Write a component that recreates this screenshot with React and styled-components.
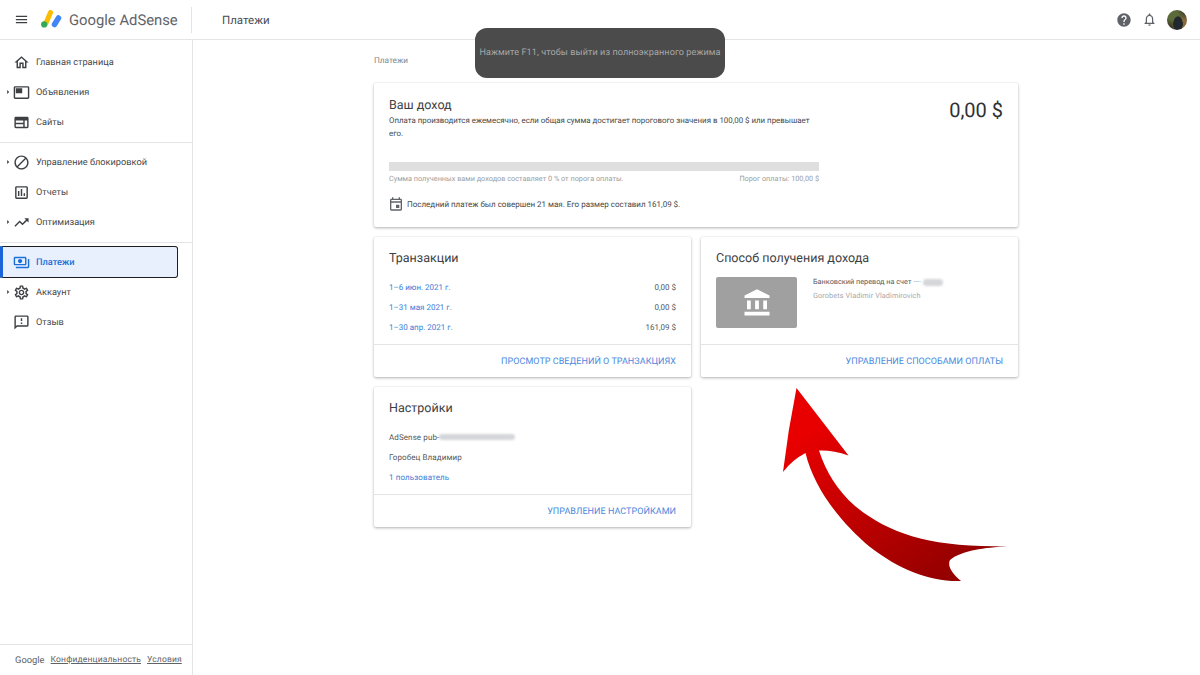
import styled, { createGlobalStyle } from "styled-components";
import {
  MdMenu, MdOutlineHome, MdOutlineFeaturedVideo, MdOutlineWeb, MdBlock, MdOutlineAssessment,
  MdTrendingUp, MdOutlinePayments, MdOutlineSettings, MdOutlineFeedback, MdOutlineEvent,
  MdAccountBalance, MdHelp, MdOutlineNotifications, MdArrowRight,
} from "react-icons/md";

const Global = createGlobalStyle`
  html, body { margin: 0; height: 100%; overflow: hidden; background: #fff; }
  * { box-sizing: border-box; }
  body {
    font-family: Roboto, "Liberation Sans", sans-serif;
    color: #3c4043;
    text-rendering: geometricPrecision;
  }
`;

const Page = styled.div`
  position: relative;
  width: 1200px;
  height: 675px;
  display: flex;
  flex-direction: column;
  overflow: hidden;
`;
const Header = styled.header`
  height: 40px;
  flex: none;
  display: flex;
  align-items: center;
  border-bottom: 1px solid #e4e4e4;
  padding: 0 13px 0 14px;
`;
const MenuButton = styled(MdMenu)`
  font-size: 15px;
  color: #3c4043;
  margin-right: 12px;
`;
const Logo = styled.div`
  display: flex;
  align-items: center;
  gap: 7px;
  width: 151px;
  height: 26px;
  border-right: 1px solid #e4e4e4;
  flex: none;
  font-size: 14.8px;
  color: #5f6368;
`;
const PageTitle = styled.div`
  margin-left: 30px;
  font-size: 11.5px;
  color: #4a4d50;
  flex: 1;
`;
const HeaderIcons = styled.div`
  display: flex;
  align-items: center;
`;
const HelpIcon = styled(MdHelp)`
  font-size: 16px;
  color: #5f6368;
  margin-right: 10px;
`;
const BellIcon = styled(MdOutlineNotifications)`
  font-size: 15px;
  color: #5f6368;
  margin-right: 10px;
`;
const Avatar = styled.div`
  width: 20px;
  height: 20px;
  border-radius: 50%;
  background:
    radial-gradient(ellipse 5px 8px at 55% 70%, #23282e 0 90%, transparent 100%),
    radial-gradient(circle at 30% 25%, #5c6b3a 0 25%, transparent 60%),
    radial-gradient(circle at 80% 75%, #8a6a3a 0 25%, transparent 55%),
    #3a3424;
`;
const Body = styled.div`
  flex: 1;
  display: flex;
  min-height: 0;
`;
const Sidebar = styled.aside`
  width: 193px;
  flex: none;
  display: flex;
  flex-direction: column;
  border-right: 1px solid #e4e4e4;
`;
const NavGroup = styled.nav`
  padding: ${p => p.$first ? "7px 0 5px" : "4px 0 5px"};
  border-bottom: ${p => p.$last ? "none" : "1px solid #e4e4e4"};
`;
const NavRow = styled.div`
  position: relative;
  height: ${p => p.$active ? "32px" : "30px"};
  margin: ${p => p.$active ? "-1px 0" : "0"};
  width: ${p => p.$active ? "178px" : "auto"};
  display: flex;
  align-items: center;
  padding-left: ${p => p.$active ? "10px" : "13px"};
  font-size: 9.2px;
  font-weight: ${p => p.$active ? 500 : 400};
  color: ${p => p.$active ? "#1a6fd8" : "#45484b"};
  background: ${p => p.$active ? "#e8f0fe" : "transparent"};
  border: ${p => p.$active ? "1.5px solid #1f1f1f" : "none"};
  border-left: ${p => p.$active ? "3px solid #1a63d8" : "none"};
  border-radius: ${p => p.$active ? "0 3px 3px 0" : "0"};

  svg.main {
    font-size: 17px;
    margin-right: 6px;
    color: ${p => p.$active ? "#1a6fd8" : "#3c4043"};
  }
`;
const Caret = styled(MdArrowRight)`
  position: absolute;
  left: 3px;
  top: 50%;
  margin-top: -5px;
  font-size: 10px;
  color: #3c4043;
`;
const SideFooter = styled.div`
  margin-top: auto;
  height: 31px;
  border-top: 1px solid #e4e4e4;
  display: flex;
  align-items: center;
  padding-left: 15px;
  gap: 6px;
  font-size: 8.5px;
  color: #5f6368;
`;
const FooterBrand = styled.span`
  font-size: 9.4px;
  color: #5f6368;
`;
const FooterLink = styled.a`
  text-decoration: underline;
  letter-spacing: .15px;
`;
const Main = styled.main`
  flex: 1;
  display: flex;
  justify-content: center;
  padding-right: 1px;
`;
const Content = styled.div`
  width: 644px;
  padding-top: 15px;
`;
const Crumb = styled.div`
  font-size: 8.2px;
  line-height: 12px;
  color: #80868b;
  margin-bottom: 16px;
`;
const Grid = styled.div`
  display: grid;
  grid-template-columns: 317px 317px;
  column-gap: 10px;
  row-gap: 10px;
`;
const Card = styled.section`
  grid-column: ${p => p.$wide ? "1 / -1" : "auto"};
  height: ${p => p.$h}px;
  background: #fff;
  border-radius: 2px;
  box-shadow: 0 1px 3px rgba(0, 0, 0, .3), 0 0 2px rgba(0, 0, 0, .06);
  display: flex;
  flex-direction: column;
`;
const CardBody = styled.div`
  flex: 1;
  padding: ${p => p.$top || 12}px 15px 0;
`;
const CardTitle = styled.h2`
  margin: 0;
  font-weight: 400;
  font-size: 12.5px;
  line-height: 19px;
  color: #3c4043;
`;
const CardFooter = styled.div`
  height: 33px;
  flex: none;
  border-top: 1px solid #e4e4e4;
  display: flex;
  align-items: center;
  justify-content: flex-end;
  padding: 1px 15px 0 0;
  font-size: 9px;
  letter-spacing: .04px;
  color: #4a88dd;
`;
const IncomeHead = styled.div`
  display: flex;
  justify-content: space-between;
`;
const IncomeText = styled.div`
  width: 430px;
`;
const Amount = styled.div`
  font-size: 20px;
  line-height: 24px;
  color: #2f3235;
  margin-top: 2px;
`;
const Note = styled.p`
  margin: -1px 0 0;
  font-size: 7.9px;
  line-height: 13px;
  color: #45484b;
`;
const Progress = styled.div`
  width: 430px;
  height: 9px;
  margin-top: 22px;
  background: #dfdfdf;
`;
const ProgressLabels = styled.div`
  width: 430px;
  display: flex;
  justify-content: space-between;
  margin-top: 2px;
  font-size: 7.3px;
  line-height: 11px;
  color: #9a9da0;
`;
const LastPayment = styled.div`
  display: flex;
  align-items: center;
  gap: 3px;
  margin-top: 12px;
  font-size: 8px;
  color: #45484b;
  svg { font-size: 16px; color: #5f6368; margin-left: -1px; }
`;
const Rows = styled.div`
  margin-top: 9px;
`;
const TxRow = styled.div`
  height: 20px;
  display: flex;
  align-items: center;
  justify-content: space-between;
  font-size: 8px;
  color: #55585b;
`;
const TxLink = styled.a`
  color: #3b7dd8;
`;
const PayoutRow = styled.div`
  display: flex;
  margin-top: 9px;
`;
const BankTile = styled.div`
  width: 81px;
  height: 51px;
  border-radius: 2px;
  background: #a0a0a0;
  display: flex;
  align-items: center;
  justify-content: center;
  flex: none;
  svg { font-size: 30px; color: #fff; }
`;
const BankInfo = styled.div`
  margin: -2px 0 0 16px;
  font-size: 7.3px;
  line-height: 14px;
  color: #55585b;
`;
const BankLine = styled.div`
  display: flex;
  align-items: center;
  gap: 2px;
`;
const Holder = styled.div`
  color: #a5a8ab;
  letter-spacing: .1px;
`;
const Smudge = styled.span`
  display: inline-block;
  width: ${p => p.$w}px;
  height: ${p => p.$h || 7}px;
  border-radius: 4px;
  background: #d4d6d9;
  filter: blur(1px);
`;
const SettingRow = styled.div`
  height: 20px;
  display: flex;
  align-items: center;
  font-size: 8px;
  color: #55585b;
  letter-spacing: .1px;
`;
const Toast = styled.div`
  position: absolute;
  left: 475px;
  top: 28px;
  width: 250px;
  height: 50px;
  border-radius: 12px;
  background: #4b4b4b;
  color: #a8a8a8;
  font-size: 9.05px;
  display: flex;
  align-items: center;
  justify-content: center;
  letter-spacing: .1px;
`;
const Arrow = styled.svg`
  position: absolute;
  left: 770px;
  top: 380px;
  width: 250px;
  height: 210px;
`;

const LogoMark = () => (
  <svg width="21" height="20" viewBox="0 0 21 20">
    <line x1="9.5" y1="2.5" x2="5" y2="13" stroke="#fbbc04" strokeWidth="5" strokeLinecap="round" />
    <line x1="17.5" y1="8" x2="13.5" y2="14.5" stroke="#4285f4" strokeWidth="5.5" strokeLinecap="round" />
    <circle cx="3.2" cy="14.4" r="3.1" fill="#34a853" />
  </svg>
);

const nav = [
  [
    { icon: MdOutlineHome, label: "Главная страница" },
    { icon: MdOutlineFeaturedVideo, label: "Объявления", caret: true },
    { icon: MdOutlineWeb, label: "Сайты" },
  ],
  [
    { icon: MdBlock, label: "Управление блокировкой", caret: true },
    { icon: MdOutlineAssessment, label: "Отчеты" },
    { icon: MdTrendingUp, label: "Оптимизация", caret: true },
  ],
  [
    { icon: MdOutlinePayments, label: "Платежи", active: true },
    { icon: MdOutlineSettings, label: "Аккаунт", caret: true },
    { icon: MdOutlineFeedback, label: "Отзыв" },
  ],
];

const transactions = [
  ["1–6 июн. 2021 г.", "0,00 $"],
  ["1–31 мая 2021 г.", "0,00 $"],
  ["1–30 апр. 2021 г.", "161,09 $"],
];

const App = () => (
  <Page>
    <Global />
    <Header>
      <MenuButton />
      <Logo>
        <LogoMark />
        <span>Google AdSense</span>
      </Logo>
      <PageTitle>Платежи</PageTitle>
      <HeaderIcons>
        <HelpIcon />
        <BellIcon />
        <Avatar />
      </HeaderIcons>
    </Header>
    <Body>
      <Sidebar>
        {nav.map((group, i) => (
          <NavGroup key={i} $first={i === 0} $last={i === nav.length - 1}>
            {group.map(({ icon: Icon, label, caret, active }) => (
              <NavRow key={label} $active={active}>
                {caret && <Caret />}
                <Icon className="main" />
                {label}
              </NavRow>
            ))}
          </NavGroup>
        ))}
        <SideFooter>
          <FooterBrand>Google</FooterBrand>
          <FooterLink>Конфиденциальность</FooterLink>
          <FooterLink>Условия</FooterLink>
        </SideFooter>
      </Sidebar>
      <Main>
        <Content>
          <Crumb>Платежи</Crumb>
          <Grid>
            <Card $wide $h={144}>
              <CardBody $top={13}>
                <IncomeHead>
                  <IncomeText>
                    <CardTitle>Ваш доход</CardTitle>
                    <Note>
                      Оплата производится ежемесячно, если общая сумма достигает порогового значения в 100,00 $ или превышает его.
                    </Note>
                  </IncomeText>
                  <Amount>0,00 $</Amount>
                </IncomeHead>
                <Progress />
                <ProgressLabels>
                  <span>Сумма полученных вами доходов составляет 0 % от порога оплаты.</span>
                  <span>Порог оплаты: 100,00 $</span>
                </ProgressLabels>
                <LastPayment>
                  <MdOutlineEvent />
                  Последний платеж был совершен 21 мая. Его размер составил 161,09 $.
                </LastPayment>
              </CardBody>
            </Card>
            <Card $h={140}>
              <CardBody>
                <CardTitle>Транзакции</CardTitle>
                <Rows>
                  {transactions.map(([period, sum]) => (
                    <TxRow key={period}>
                      <TxLink>{period}</TxLink>
                      <span>{sum}</span>
                    </TxRow>
                  ))}
                </Rows>
              </CardBody>
              <CardFooter>ПРОСМОТР СВЕДЕНИЙ О ТРАНЗАКЦИЯХ</CardFooter>
            </Card>
            <Card $h={140}>
              <CardBody>
                <CardTitle>Способ получения дохода</CardTitle>
                <PayoutRow>
                  <BankTile>
                    <MdAccountBalance />
                  </BankTile>
                  <BankInfo>
                    <BankLine>
                      Банковский перевод на счет ···· <Smudge $w={20} />
                    </BankLine>
                    <Holder>Gorobets Vladimir Vladimirovich</Holder>
                  </BankInfo>
                </PayoutRow>
              </CardBody>
              <CardFooter>УПРАВЛЕНИЕ СПОСОБАМИ ОПЛАТЫ</CardFooter>
            </Card>
            <Card $h={140}>
              <CardBody>
                <CardTitle>Настройки</CardTitle>
                <Rows>
                  <SettingRow>
                    AdSense pub-<Smudge $w={76} $h={6} />
                  </SettingRow>
                  <SettingRow>Горобец Владимир</SettingRow>
                  <SettingRow>
                    <TxLink>1 пользователь</TxLink>
                  </SettingRow>
                </Rows>
              </CardBody>
              <CardFooter>УПРАВЛЕНИЕ НАСТРОЙКАМИ</CardFooter>
            </Card>
          </Grid>
        </Content>
      </Main>
    </Body>
    <Toast>Нажмите F11, чтобы выйти из полноэкранного режима</Toast>
    <Arrow viewBox="0 0 250 210">
      <defs>
        <linearGradient id="arrowFill" x1="0.15" y1="0.2" x2="0.75" y2="0.95">
          <stop offset="0" stopColor="#e80000" />
          <stop offset="1" stopColor="#950000" />
        </linearGradient>
      </defs>
      <path
        fill="url(#arrowFill)"
        d="M26.5 8 L78.5 75.5 Q63 70 49 70.5 C56 92 67 110 85 126 C118 153 160 168 237 166 C215 168 192 170 180 180 C177 186 182 193 191 201 C160 202 130 190 100 167 C70 142 44 108 35.5 73 Q22 80 13 92 Q18 50 26.5 8 Z"
      />
    </Arrow>
  </Page>
);

export default App;
